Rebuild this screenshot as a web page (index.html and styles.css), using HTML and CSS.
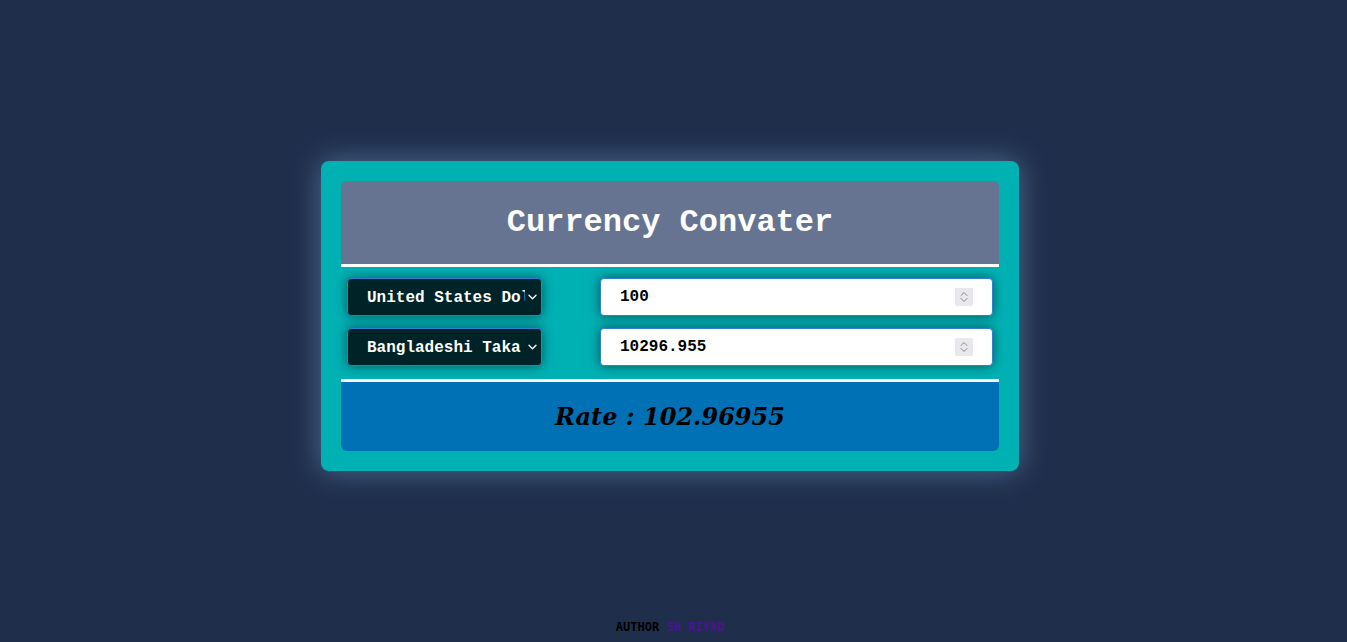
FILE: index.html
```html
<!DOCTYPE html>
<html lang="en">
<head>
<meta charset="utf-8">
<title>Currency Convater</title>
<link rel="stylesheet" href="styles.css">
</head>
<body>
<main class="stage">
  <section class="card">
    <header class="card-head">
      <h1 class="title">Currency Convater</h1>
    </header>
    <div class="rows">
      <div class="row">
        <div class="select-wrap">
          <select class="cur-select">
            <option>United States Dollar</option>
            <option>Bangladeshi Taka</option>
          </select>
          <svg class="chev" width="9" height="6" viewBox="0 0 9 6" aria-hidden="true"><path d="M1 1.2 L4.5 4.7 L8 1.2" fill="none" stroke="#ffffff" stroke-width="1.3" stroke-linecap="round" stroke-linejoin="round"/></svg>
        </div>
        <div class="num-wrap">
          <input class="amount" type="number" value="100">
          <svg class="spin" width="18" height="18" viewBox="0 0 18 18" aria-hidden="true"><rect width="18" height="18" rx="1" fill="#e9e9ed"/><path d="M6 7.5 L9 4.5 L12 7.5 M6 10.5 L9 13.5 L12 10.5" fill="none" stroke="#85858c" stroke-width="1" stroke-linecap="round" stroke-linejoin="round"/></svg>
        </div>
      </div>
      <div class="row">
        <div class="select-wrap">
          <select class="cur-select">
            <option>Bangladeshi Taka</option>
            <option>United States Dollar</option>
          </select>
          <svg class="chev" width="9" height="6" viewBox="0 0 9 6" aria-hidden="true"><path d="M1 1.2 L4.5 4.7 L8 1.2" fill="none" stroke="#ffffff" stroke-width="1.3" stroke-linecap="round" stroke-linejoin="round"/></svg>
        </div>
        <div class="num-wrap">
          <input class="amount" type="number" value="10296.955">
          <svg class="spin" width="18" height="18" viewBox="0 0 18 18" aria-hidden="true"><rect width="18" height="18" rx="1" fill="#e9e9ed"/><path d="M6 7.5 L9 4.5 L12 7.5 M6 10.5 L9 13.5 L12 10.5" fill="none" stroke="#85858c" stroke-width="1" stroke-linecap="round" stroke-linejoin="round"/></svg>
        </div>
      </div>
    </div>
    <div class="rate-box">
      <h2 class="rate">Rate : 102.96955</h2>
    </div>
  </section>
</main>
<footer class="footer">AUTHOR <span class="author-name">SH RIYAD</span></footer>
</body>
</html>
```

FILE: styles.css
```css
html, body {
  margin: 0;
  padding: 0;
}
body {
  background: #1f2e4b;
  height: 100vh;
  display: flex;
  flex-direction: column;
  font-family: "Liberation Mono", "Courier New", monospace;
}
.stage {
  flex: 1;
  display: flex;
  align-items: center;
  justify-content: center;
  padding: 11px 7px 0 0;
}
.card {
  width: 658px;
  padding: 20px;
  background: #00b1b4;
  border-radius: 8px;
  box-shadow: 0 0 30px rgba(140, 190, 235, 0.45);
}
.card-head {
  background: #667391;
  border-radius: 6px 6px 0 0;
  border-bottom: 3px solid #ffffff;
  height: 83px;
  display: flex;
  align-items: center;
  justify-content: center;
}
.title {
  margin: 0;
  color: #ffffff;
  font-family: "Liberation Mono", "Courier New", monospace;
  font-size: 32px;
  font-weight: bold;
}
.rows {
  display: flex;
  flex-direction: column;
  gap: 12px;
  padding: 11px 6px 13px;
}
.row {
  display: flex;
  justify-content: space-between;
  align-items: center;
}
.select-wrap,
.num-wrap {
  position: relative;
  display: flex;
}
.cur-select {
  -webkit-appearance: none;
  appearance: none;
  width: 195px;
  height: 38px;
  box-sizing: border-box;
  background: #002327;
  color: #ffffff;
  border: 1px solid #2f80d0;
  border-radius: 4px;
  padding: 2px 16px 0 19px;
  font-family: "Liberation Mono", "Courier New", monospace;
  font-size: 16px;
  font-weight: bold;
  box-shadow: 0 0 12px rgba(0, 0, 0, 0.5);
  outline: none;
}
.chev {
  position: absolute;
  right: 5px;
  top: 16px;
  pointer-events: none;
}
.amount {
  -moz-appearance: textfield;
  width: 393px;
  height: 38px;
  box-sizing: border-box;
  background: #ffffff;
  color: #000000;
  border: 1px solid #2f80d0;
  border-radius: 4px;
  padding: 0 42px 0 19px;
  font-family: "Liberation Mono", "Courier New", monospace;
  font-size: 16px;
  font-weight: bold;
  box-shadow: 0 0 12px rgba(0, 0, 0, 0.5);
  outline: none;
}
.amount::-webkit-inner-spin-button,
.amount::-webkit-outer-spin-button {
  -webkit-appearance: none;
  margin: 0;
}
.spin {
  position: absolute;
  right: 20px;
  top: 10px;
  pointer-events: none;
}
.rate-box {
  background: #0071b5;
  border-top: 3px solid #ffffff;
  border-radius: 0 0 6px 6px;
  height: 69px;
  display: flex;
  align-items: center;
  justify-content: center;
}
.rate {
  margin: 0;
  color: #000000;
  font-family: "DejaVu Serif", serif;
  font-style: italic;
  font-weight: bold;
  font-size: 24px;
}
.footer {
  text-align: center;
  padding: 0 7px 8px 0;
  font-family: "DejaVu Sans Mono", monospace;
  font-size: 12px;
  font-weight: bold;
  color: #000000;
}
.author-name {
  color: #4b1490;
}
```
